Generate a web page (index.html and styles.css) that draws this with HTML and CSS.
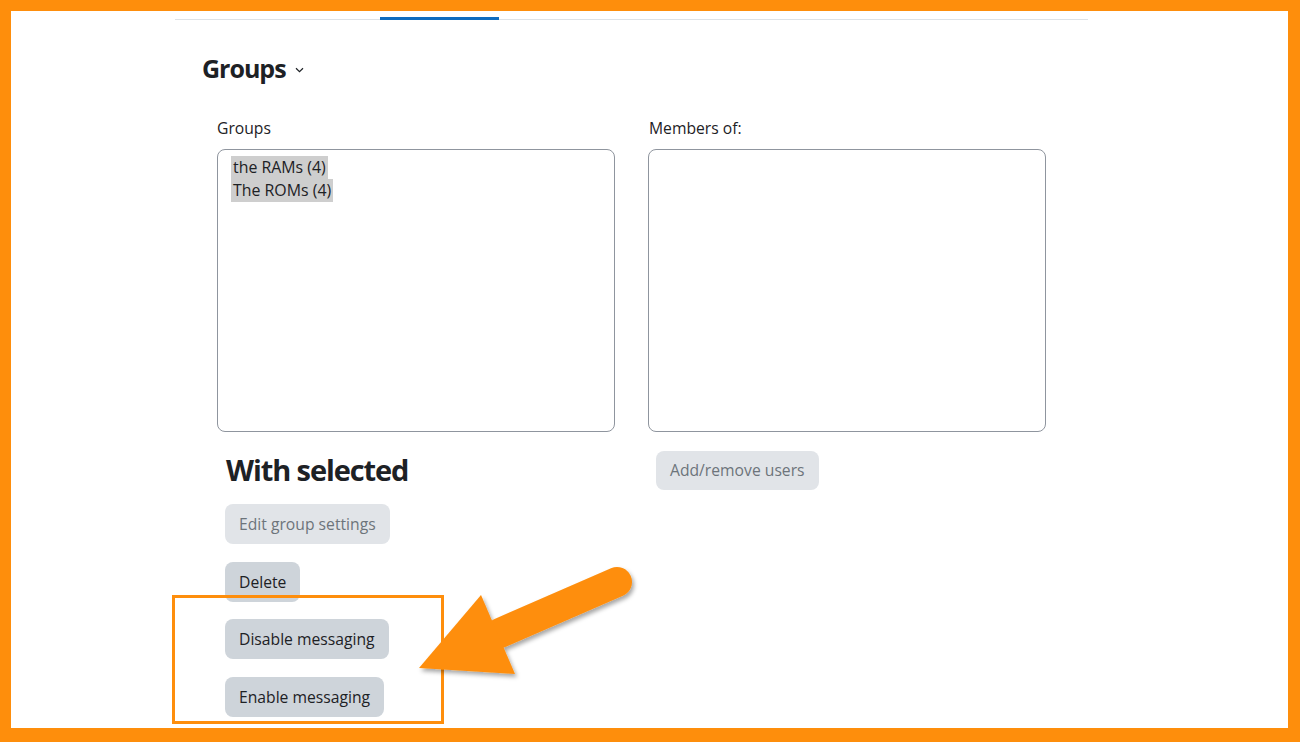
FILE: index.html
```html
<!DOCTYPE html>
<html lang="en">
<head>
<meta charset="utf-8">
<title>Groups</title>
<link rel="stylesheet" href="styles.css">
</head>
<body>
<div class="frame">
  <div class="page">
    <div class="tabs"><span class="tab-active"></span></div>
    <h2 class="page-title">Groups <svg class="chev" width="9" height="6" viewBox="0 0 9 6"><path d="M1 1.2 L4.5 4.6 L8 1.2" fill="none" stroke="#1d2125" stroke-width="1.2"/></svg></h2>
    <div class="cols">
      <div class="col">
        <div class="label">Groups</div>
        <div class="listbox">
          <div class="option">the RAMs (4)</div>
          <div class="option">The ROMs (4)</div>
        </div>
        <div class="below">
          <h3 class="with-selected">With selected</h3>
          <div class="btn-stack">
            <span class="btn btn-disabled">Edit group settings</span>
            <span class="btn">Delete</span>
            <span class="btn">Disable messaging</span>
            <span class="btn">Enable messaging</span>
          </div>
        </div>
      </div>
      <div class="col">
        <div class="label label-right">Members of:</div>
        <div class="listbox"></div>
        <div class="below below-right">
          <span class="btn btn-disabled btn-add">Add/remove users</span>
        </div>
      </div>
    </div>
  </div>
  <div class="highlight-box"></div>
  <svg class="arrow" width="1300" height="742" viewBox="0 0 1300 742">
    <defs>
      <filter id="sh" x="-20%" y="-20%" width="140%" height="140%">
        <feDropShadow dx="2" dy="3" stdDeviation="2" flood-color="#000" flood-opacity="0.35"/>
      </filter>
    </defs>
    <g filter="url(#sh)" fill="#fe8e0c">
      <line x1="500" y1="633" x2="617" y2="582" stroke="#fe8e0c" stroke-width="30" stroke-linecap="round"/>
      <polygon points="481,595 419,668 515,674"/>
    </g>
  </svg>
</div>
</body>
</html>
```

FILE: styles.css
```css
html, body {
  margin: 0;
  padding: 0;
  background: #ffffff;
}

body {
  font-family: "Open Sans", "Noto Sans", sans-serif;
  color: #1d2125;
}

.frame {
  position: relative;
  box-sizing: border-box;
  width: 1300px;
  height: 742px;
  border-style: solid;
  border-color: #fe8e0c;
  border-width: 11px 12px 14px 11px;
  background: #ffffff;
  overflow: hidden;
}

.page {
  margin-left: 164px;
  width: 913px;
}

.tabs {
  display: flex;
  box-sizing: border-box;
  height: 9px;
  border-bottom: 1px solid #dee2e6;
  align-items: flex-end;
}

.tab-active {
  display: block;
  width: 119px;
  height: 3px;
  margin-left: 205px;
  margin-bottom: -1px;
  background: #0f6cbf;
}

.page-title {
  margin: 31px 0 0 27px;
  font-size: 25px;
  line-height: 34px;
  font-weight: 700;
  letter-spacing: -1px;
  display: flex;
  align-items: center;
}

.chev {
  margin-left: 9px;
  margin-top: 4px;
}

.cols {
  margin-top: 32px;
  margin-left: 42px;
  display: grid;
  grid-template-columns: 398px 398px;
  column-gap: 33px;
}

.label {
  font-size: 15.7px;
  line-height: 20px;
  margin-bottom: 12px;
  padding-top: 1px;
  height: 20px;
  box-sizing: border-box;
}

.label-right {
  padding-left: 1px;
}

.listbox {
  box-sizing: border-box;
  height: 283px;
  border: 1px solid #8f959e;
  border-radius: 8px;
  padding: 6px 13px;
}

.option {
  display: table;
  background: #cecece;
  padding: 0 2px;
  font-size: 15.9px;
  line-height: 23px;
}

.below {
  padding-left: 8px;
}

.with-selected {
  margin: 18px 0 0 1px;
  font-size: 29px;
  line-height: 40px;
  font-weight: 700;
  letter-spacing: -1.1px;
}

.btn-stack {
  margin-top: 14px;
  display: flex;
  flex-direction: column;
  align-items: flex-start;
  gap: 17.5px;
}

.btn {
  display: inline-block;
  box-sizing: border-box;
  height: 40px;
  line-height: 40px;
  padding: 0 14px;
  border-radius: 8px;
  background: #ced4da;
  color: #1d2125;
  font-size: 15.7px;
}

.btn-disabled {
  background: #e1e4e8;
  color: #6d747b;
}

.below-right {
  padding-top: 19px;
}

.btn-add {
  height: 39px;
  line-height: 39px;
}

.highlight-box {
  position: absolute;
  left: 161px;
  top: 584px;
  width: 272px;
  height: 129px;
  box-sizing: border-box;
  border: 3px solid #fe8e0c;
}

.arrow {
  position: absolute;
  left: -11px;
  top: -11px;
}
```
